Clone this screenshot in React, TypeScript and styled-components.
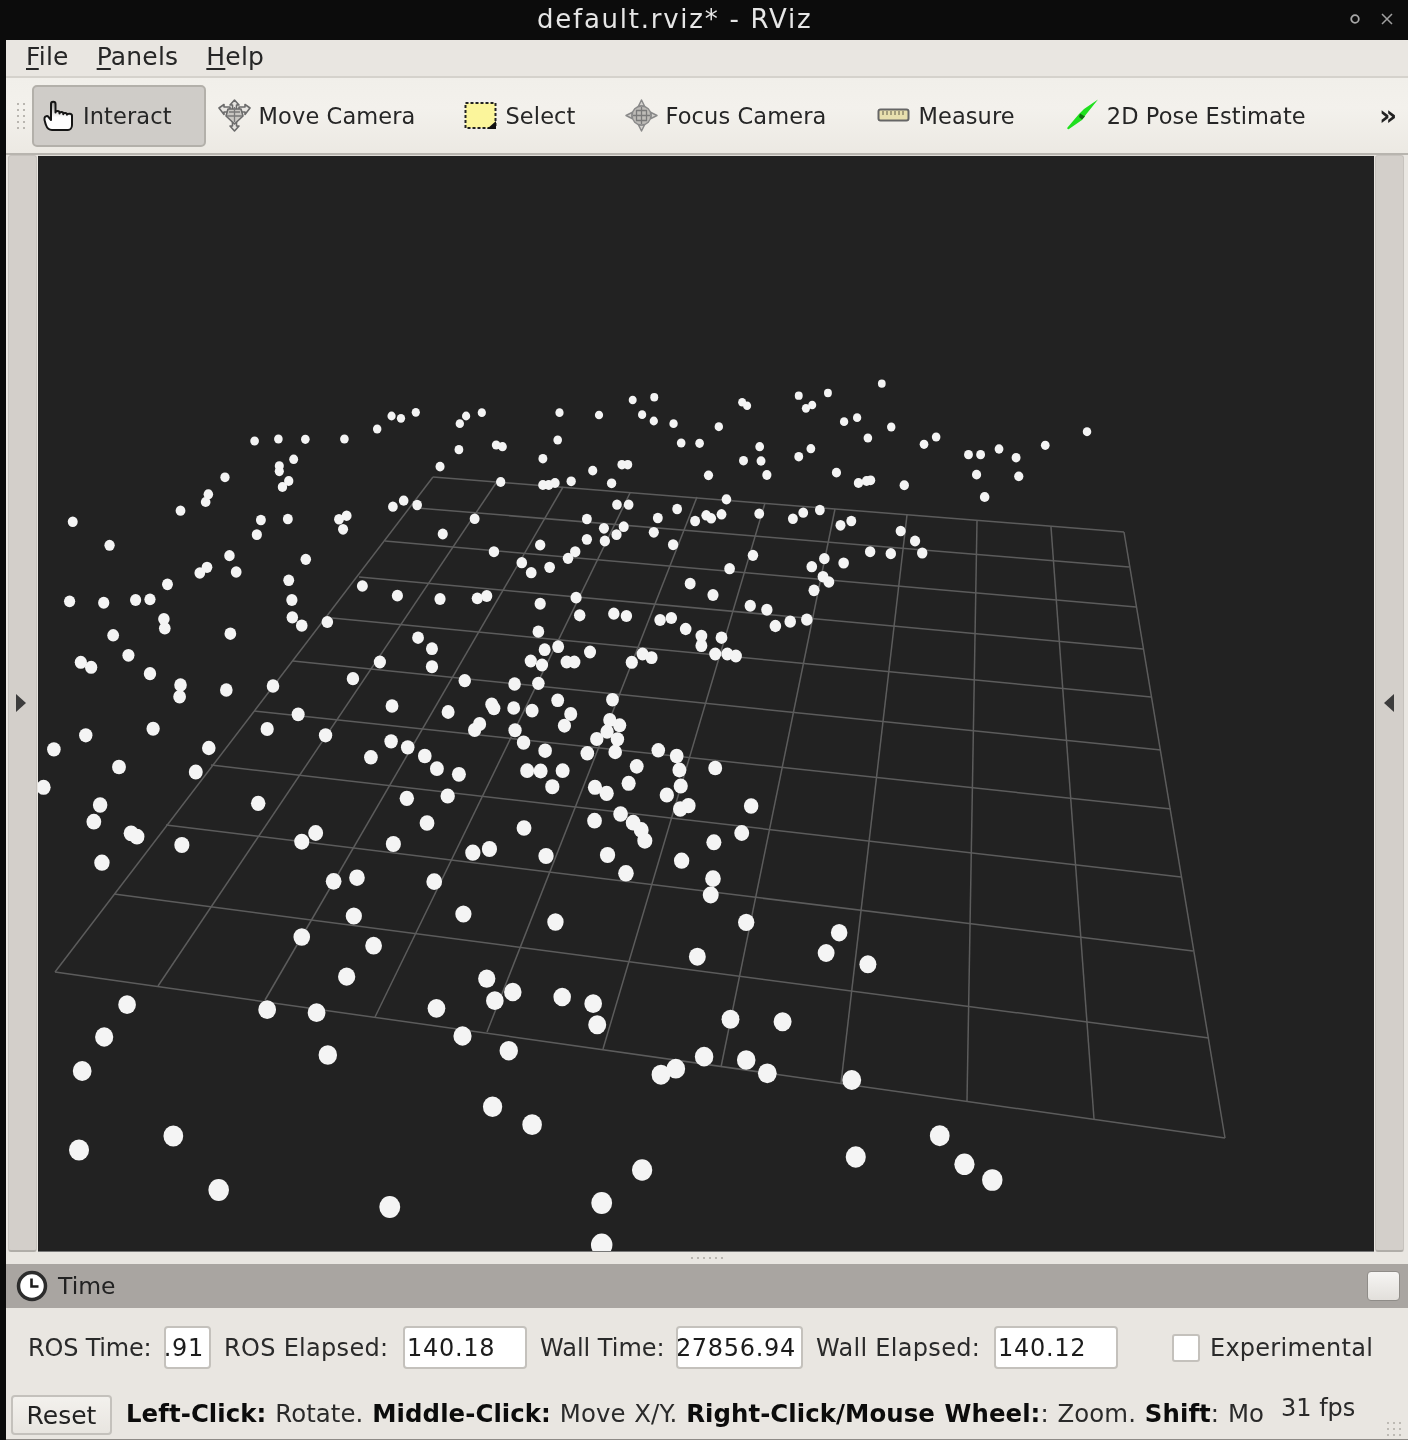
import React from "react";
import styled, { createGlobalStyle } from "styled-components";

const Global = createGlobalStyle`
  html, body { margin: 0; padding: 0; background: #0a0a0a; }
  #root { width: 1408px; height: 1440px; overflow: hidden; }
`;

const FONT = `"DejaVu Sans", "Liberation Sans", sans-serif`;

const Window = styled.div`
  width: 1408px;
  height: 1440px;
  display: flex;
  flex-direction: column;
  position: relative;
  overflow: hidden;
  background: #0a0a0a;
  font-family: ${FONT};
  color: #222;
  filter: blur(0.6px);
`;
const TitleBar = styled.div`
  height: 40px;
  flex: none;
  background: #0c0c0c;
  display: flex;
  align-items: center;
  justify-content: space-between;
  padding: 0 15px 2px 537px;
  box-sizing: border-box;
`;
const TitleText = styled.div`
  color: #e6e6e6;
  font-size: 26px;
  letter-spacing: 1.75px;
  white-space: nowrap;
`;
const WindowButtons = styled.div`
  display: flex;
  align-items: center;
  gap: 20px;
`;
const Body = styled.div`
  flex: 1;
  min-height: 0;
  display: flex;
  flex-direction: column;
  margin-left: 6px;
  background: #e9e6e1;
  border-bottom: 1px solid #8d8a86;
`;
const MenuBar = styled.div`
  height: 36px;
  flex: none;
  box-sizing: content-box;
  display: flex;
  align-items: center;
  gap: 28px;
  padding-left: 20px;
  padding-bottom: 0;
  font-size: 25px;
  letter-spacing: 0.2px;
  line-height: 32px;
  color: #262626;
  border-bottom: 2px solid #d5d2cc;
  span { margin-top: -3px; }
`;
const Toolbar = styled.div`
  height: 77px;
  flex: none;
  box-sizing: border-box;
  display: flex;
  align-items: center;
  gap: 2px;
  padding-left: 9px;
  padding-right: 12px;
  background: linear-gradient(#f1efea, #f3f1ec 40%, #ece9e3);
  border-bottom: 2px solid #b8b5af;
`;
const Grip = styled.div`
  width: 12px;
  height: 30px;
  margin-right: 3px;
  flex: none;
  background-image: radial-gradient(circle, #b9b6b0 1.1px, transparent 1.4px);
  background-size: 6px 6px;
`;
const Tool = styled.div<{ $active?: boolean; $extra?: number }>`
  height: 62px;
  box-sizing: border-box;
  display: flex;
  align-items: center;
  gap: 8px;
  padding: ${(p) =>
    p.$active ? "0 32px 0 8px" : `0 ${37 + (p.$extra ?? 0)}px 0 10px`};
  font-size: 22.5px;
  letter-spacing: 0.1px;
  white-space: nowrap;
  color: #262626;
  border-radius: 5px;
  border: ${(p) => (p.$active ? "2px solid #b3b0aa" : "none")};
  background: ${(p) => (p.$active ? "#cfccc8" : "transparent")};
`;
const Chevron = styled.div`
  margin-left: auto;
  margin-right: -1px;
  font-weight: bold;
  font-size: 28px;
  line-height: 1;
  color: #222;
`;
const Main = styled.div`
  height: 1097px;
  flex: none;
  display: flex;
  gap: 1px;
  padding-left: 2px;
  padding-right: 4px;
`;
const SideBar = styled.div<{ $side: "left" | "right" }>`
  width: 29px;
  flex: none;
  display: flex;
  align-items: center;
  justify-content: center;
  padding: ${(p) => (p.$side === "left" ? "0 4px 0 0" : "0 2px 0 0")};
  background: #d3cfca;
  border: 1px solid #c6c2bd;
  border-bottom: 2px solid #b0ada8;
  border-radius: 3px;
  box-sizing: border-box;
`;
const Arrow = styled.div<{ $dir: "left" | "right" }>`
  width: 0;
  height: 0;
  border-top: 9px solid transparent;
  border-bottom: 9px solid transparent;
  ${(p) =>
    p.$dir === "right"
      ? "border-left: 10px solid #3c3c3c;"
      : "border-right: 10px solid #3c3c3c;"}
`;
const Viewport = styled.svg`
  display: block;
  flex: 1;
  height: 1097px;
  background: #222222;
  border-top: 1px solid #e0ddd8;
  border-bottom: 1px solid #777;
  box-sizing: border-box;
`;
const Splitter = styled.div`
  height: 12px;
  flex: none;
  display: flex;
  align-items: center;
  justify-content: center;
`;
const SplitterDots = styled.div`
  width: 36px;
  height: 4px;
  background-image: radial-gradient(circle, #b9b6b0 1px, transparent 1.3px);
  background-size: 6px 4px;
`;
const TimeHeader = styled.div`
  height: 44px;
  flex: none;
  display: flex;
  align-items: center;
  gap: 10px;
  padding: 0 8px 0 10px;
  background: #a9a5a1;
  font-size: 23.5px;
  color: #222;
`;
const HeaderClose = styled.div`
  margin-left: auto;
  width: 33px;
  height: 30px;
  border-radius: 4px;
  border: 1px solid #8f8c88;
  box-sizing: border-box;
  background: linear-gradient(#f6f5f3, #e2dfdb);
`;
const TimeRow = styled.div`
  display: flex;
  align-items: center;
  height: 43px;
  flex: none;
  margin-top: 18px;
  padding-left: 22px;
  font-size: 24px;
  white-space: nowrap;
  color: #2a2a2a;
`;
const Label = styled.span<{ $w: number; $ls?: number }>`
  width: ${(p) => p.$w}px;
  flex: none;
  margin-right: 14px;
  letter-spacing: ${(p) => p.$ls ?? 0}px;
`;
const Field = styled.div<{ $w: number; $end?: boolean }>`
  width: ${(p) => p.$w}px;
  height: 43px;
  flex: none;
  box-sizing: border-box;
  background: #fff;
  border: 2px solid #c4c1bc;
  border-radius: 4px;
  margin-right: 13px;
  padding: 0 5px 0 2px;
  display: flex;
  align-items: center;
  justify-content: ${(p) => (p.$end ? "flex-end" : "flex-start")};
  font-size: 24px;
  letter-spacing: 0.7px;
  color: #1c1c1c;
  overflow: hidden;
`;
const Check = styled.div`
  width: 28px;
  height: 28px;
  flex: none;
  box-sizing: border-box;
  background: #fff;
  border: 2px solid #c4c1bc;
  border-radius: 3px;
  margin-left: 41px;
  margin-right: 10px;
`;
const CheckText = styled.span`
  letter-spacing: 0.25px;
`;
const StatusRow = styled.div`
  display: flex;
  align-items: center;
  height: 40px;
  flex: none;
  margin-top: 26px;
  padding-left: 5px;
  white-space: nowrap;
`;
const ResetButton = styled.div`
  width: 101px;
  height: 40px;
  flex: none;
  box-sizing: border-box;
  display: flex;
  align-items: center;
  justify-content: center;
  font-size: 25px;
  color: #222;
  border: 2px solid #c4c1bc;
  border-radius: 4px;
  background: linear-gradient(#f3f1ed, #e8e5e0);
`;
const StatusText = styled.div`
  width: 1137px;
  margin-left: 14px;
  margin-bottom: 4px;
  flex: none;
  overflow: hidden;
  font-size: 24.4px;
  color: #2a2a2a;
  letter-spacing: 0.08px;
  word-spacing: 1px;
  b { color: #0c0c0c; font-weight: bold; }
`;
const Fps = styled.div`
  margin-left: 18px;
  margin-bottom: 14px;
  font-size: 24px;
  color: #2a2a2a;
`;
const SizeGrip = styled.div`
  position: absolute;
  right: 3px;
  bottom: 2px;
  width: 20px;
  height: 18px;
  background-image: radial-gradient(circle, #bdbab4 1px, transparent 1.3px);
  background-size: 6px 6px;
`;
const Underlined = styled.span`
  text-decoration: underline;
  text-underline-offset: 3px;
  margin-top: 0 !important;
`;

// Scene data, read from enlarged crops: [crop x, crop y], crop x is 2.227 × px and crop y is 3 × px.
const CROP_A: number[][] = [[567,213],[620,207],[680,208],[767,207],[840,177],[872,138],[893,145],[926,127],[1038,138],[1024,161],[1073,128],[1246,128],[1334,135],[1409,90],[1457,82],[1430,134],[1456,153],[1500,161],[1517,219],[1558,220],[1242,210],[1022,239],[1105,225],[1119,230],[1209,266],[1320,302],[1385,284],[1398,284],[980,290],[654,268],[622,288],[622,304],[643,333],[629,351],[501,322],[464,373],[458,396],[402,422],[162,455],[244,526],[581,450],[641,447],[572,494],[755,448],[772,437],[764,478],[875,410],[899,392],[929,405],[1115,336],[1209,345],[1222,345],[1236,339],[1272,334],[1362,340],[1374,404],[1400,404],[1508,417],[1057,446],[986,492],[1307,447],[1345,475],[1389,470],[1373,494],[1347,513],[1307,508],[1465,444],[1456,487],[1548,453],[1499,524],[1100,545],[1203,525],[1281,545],[1265,565],[1162,578],[1183,608],[1224,592],[511,557],[461,592],[445,609],[526,606],[681,568],[373,643],[155,694],[231,698],[302,690],[334,688],[643,631],[650,690],[807,648],[885,677],[980,687],[1063,685],[1084,678],[1283,683],[1203,701],[1537,641],[1291,736],[1367,731],[1395,738],[1470,750],[1495,744],[1527,777],[365,747],[367,775],[252,796],[651,742],[672,767],[729,756],[513,791],[1199,785],[931,803],[962,836],[1243,830],[1213,839],[1314,846],[1431,852],[1451,863],[1407,877],[1182,873],[1207,885],[1262,876],[1279,876],[180,877],[203,892],[286,856],[334,911],[846,876],[962,890],[1562,798],[1562,827],[402,945],[400,980],[504,960],[608,948],[786,926],[1035,932],[1146,942],[1199,940],[1242,991],[1364,989],[873,1008],[998,1026],[1095,1003],[1100,1015],[1144,1014],[1185,1022],[1271,1032],[1257,1067],[1358,1050],[1380,1066],[664,1033],[341,1076],[595,1077],[1068,1062],[1057,1080],[1147,1081],[1352,1085],[1329,1107],[1375,1108],[191,1096],[725,1096],[120,1138],[465,1134],[871,1114],[908,1132],[1166,1118],[1214,1142],[1308,1150],[1370,1146],[1466,1141],[1507,1158],[826,1162],[946,1158],[265,1191],[973,1196],[1022,1213],[1174,1202],[1204,1203],[1253,1202],[1418,1189],[1513,1200],[436,1206],[97,1252],[1230,1250],[1325,1252],[1351,1270],[1400,1240],[1516,1248],[906,1285],[997,1278],[1485,1275]];
const CROP_B: number[][] = [[396,41],[211,77],[276,69],[85,97],[96,107],[227,115],[241,105],[33,170],[312,155],[341,143],[417,171],[365,204],[490,223],[517,201],[853,185],[124,230],[238,236],[88,272],[127,273],[211,260],[589,254],[616,254],[657,237],[695,263],[760,226],[10,316],[140,315],[295,308],[344,339],[362,333],[371,331],[446,346],[607,314],[701,319],[625,381],[50,388],[123,431],[198,446],[221,428],[258,420],[5,436],[16,445],[39,433],[304,466],[328,453],[438,483],[470,513],[370,545],[416,551],[486,549],[109,556],[268,566],[311,579],[57,596],[240,590],[265,620],[278,636],[245,661],[20,675],[103,707],[140,719],[159,768],[192,755],[229,749],[39,803],[25,852],[52,852],[71,858],[25,1194]];
const CROP_C: number[][] = [[223,15],[575,10],[209,65],[292,100],[305,110],[405,135],[227,188],[672,125],[703,99],[876,132],[951,69],[1167,84],[1324,62],[1382,42],[1410,68],[1428,90],[1436,122],[1515,27],[1533,17],[1053,158],[1090,147],[1216,168],[1353,165],[1518,182],[1394,220],[743,244],[795,233],[967,245],[788,348],[1032,342],[1237,366],[672,411],[832,437],[1553,470],[772,530],[1084,536],[1142,576],[1102,602],[1252,591],[1321,611],[1330,674],[283,614],[232,711],[183,813],[595,629],[705,638],[972,625],[1030,708],[1133,752],[730,765],[1505,806],[1472,824],[1568,770],[1097,920],[1185,974],[386,1008],[176,1050],[487,1170],[868,1221],[1430,1110],[1340,1209],[1340,1335]];
const CROP_D: number[][] = [[105,18],[84,99],[22,127],[20,236],[15,285],[94,367],[301,398],[272,459],[365,493],[59,658],[175,665],[94,780],[141,820],[329,840],[525,1007],[338,1071],[580,1093],[642,1140]];

const place = (list: number[][], ox: number, oy: number) =>
  list.map(([x, y]) => [ox + x / 2.227, oy + y / 3]);
const DOTS = [
  ...place(CROP_A, 0, 370),
  ...place(CROP_B, 704, 370),
  ...place(CROP_C, 0, 800),
  ...place(CROP_D, 704, 800),
];
const radiusAt = (y: number) => 4 + (y - 400) * 0.008;

const LEFT_EDGE = [[433,477],[417,508],[385,541],[359,577],[332,618],[293,661],[254,711],[211,765],[166,825],[114,894],[55,972]];
const RIGHT_EDGE = [[1124,532],[1129,567],[1136,607],[1143,649],[1151,697],[1161,750],[1171,809],[1181,877],[1193,951],[1209,1038],[1225,1138]];
const TOP_EDGE = [[433,477],[496,483],[563,487],[630,493],[697,497],[765,503],[835,509],[907,515],[977,521],[1051,527],[1124,532]];
const BOTTOM_EDGE = [[55,972],[158,986],[265,1000],[375,1017],[487,1032],[603,1049],[721,1067],[841,1083],[967,1101],[1094,1119],[1225,1138]];

const Scene = () => (
  <Viewport viewBox="38 156 1336 1095" preserveAspectRatio="none">
    <g stroke="#5c5c5c" strokeWidth="1.5" fill="none">
      {LEFT_EDGE.map((p, i) => (
        <line key={`h${i}`} x1={p[0]} y1={p[1]} x2={RIGHT_EDGE[i][0]} y2={RIGHT_EDGE[i][1]} />
      ))}
      {TOP_EDGE.map((p, i) => (
        <line key={`v${i}`} x1={p[0]} y1={p[1]} x2={BOTTOM_EDGE[i][0]} y2={BOTTOM_EDGE[i][1]} />
      ))}
    </g>
    <g fill="#f4f4f4">
      {DOTS.map(([x, y], i) => (
        <ellipse key={i} cx={x} cy={y} rx={radiusAt(y)} ry={radiusAt(y) * 1.06} />
      ))}
    </g>
  </Viewport>
);

const IconSvg = styled.svg`
  width: 33px;
  height: 33px;
  flex: none;
  display: block;
`;

const HandIcon = () => (
  <IconSvg viewBox="0 0 33 33">
    <defs>
      <linearGradient id="handFill" x1="0" y1="0" x2="0" y2="1">
        <stop offset="0" stopColor="#9d9b98" />
        <stop offset="0.55" stopColor="#fff" />
      </linearGradient>
    </defs>
    <path
      d="M9 18V5c0-3 4.500-3 4.500 0v8.500c0-2 4-2 4 0v1c0-2 3.800-2 3.800 0v.8c0-2 3.700-1.800 3.700.2v.2c.5-1.500 5-1.500 5 1V26c0 3-2 5-4 5H10c-3 0-5-2-6-5-1-3-2-5-1.500-7 .5-2 3-2.500 4-1L9 21z"
      fill="url(#handFill)"
      stroke="#151515"
      strokeWidth="2"
      strokeLinejoin="round"
    />
  </IconSvg>
);

const MoveIcon = () => (
  <IconSvg viewBox="0 0 33 33">
    <g fill="#e8e6e2" stroke="#6b6b6b" strokeWidth="1.6" strokeLinejoin="round">
      <path d="M16.500 1l4.500 5h-2.500v5h-4V6H12z" />
      <path d="M16.500 32l4.500-5h-2.500v-5h-4v5H12z" />
      <path d="M1 9l5-3.500V8h6v5H6v2.500z" />
      <path d="M32 9l-5-3.500V8h-6v5h6v2.500z" />
      <path d="M10 10h13l2 7-8.500 8L8 17z" fill="#c9c7c3" />
    </g>
    <path d="M11 13h11M9 17h15M16.500 8v15" stroke="#7a7a7a" strokeWidth="1.300" />
  </IconSvg>
);

const SelectIcon = () => (
  <IconSvg viewBox="0 0 33 33">
    <rect x="1.500" y="4" width="30" height="25" fill="#fbf59b" />
    <rect x="1.500" y="4" width="30" height="25" fill="none" stroke="#222" strokeWidth="2" strokeDasharray="3 2" />
    <path d="M32 22v8H23z" fill="#111" />
  </IconSvg>
);

const FocusIcon = () => (
  <IconSvg viewBox="0 0 33 33">
    <g stroke="#8a8a8a" fill="#d4d2ce" strokeLinejoin="round" strokeWidth="1.500">
      <path d="M16.500 1l3 6h-6zM16.500 32l3-6h-6zM1 16.500l6-3v6zM32 16.500l-6-3v6z" />
      <circle cx="16.500" cy="16.500" r="9.500" fill="#bdbbb7" />
    </g>
    <path d="M16.500 8v17M8 16.500h17M11 11.500h11M11 21.500h11M11.500 11v11M21.500 11v11" stroke="#7a7a7a" strokeWidth="1.300" />
  </IconSvg>
);

const RulerIcon = () => (
  <IconSvg viewBox="0 0 33 33">
    <rect x="1.500" y="10.500" width="30" height="11" rx="2" fill="#e8dfae" stroke="#666" strokeWidth="2" />
    <path d="M6 12v4M10 12v4M14 12v4M18 12v4M22 12v4M26 12v4" stroke="#77725a" strokeWidth="1.200" />
  </IconSvg>
);

const PoseIcon = () => (
  <IconSvg viewBox="0 0 33 33">
    <path d="M32 .5L18 10l-5 5-11.500 13.500c-.8 1 .4 2.200 1.500 1.500L16 21l4-5.500z" fill="#1fe01f" />
    <path d="M14 14.500l5 3-3 3-3-2.500z" fill="#126e12" />
  </IconSvg>
);

const ClockSvg = styled.svg`
  width: 32px;
  height: 32px;
  flex: none;
  display: block;
`;
const ClockIcon = () => (
  <ClockSvg viewBox="0 0 32 32">
    <circle cx="16" cy="16" r="13.500" fill="#fff" stroke="#2c2c2c" strokeWidth="3.500" />
    <path d="M15.500 8.500v8h7" fill="none" stroke="#1c1c1c" strokeWidth="2.600" />
  </ClockSvg>
);

const WinCircle = styled.svg`
  width: 12px;
  height: 12px;
  display: block;
`;

const App = () => (
  <Window>
    <Global />
    <TitleBar>
      <TitleText>default.rviz* - RViz</TitleText>
      <WindowButtons>
        <WinCircle viewBox="0 0 12 12">
          <circle cx="6" cy="6" r="3.800" fill="none" stroke="#a8a8a8" strokeWidth="1.800" />
        </WinCircle>
        <WinCircle viewBox="0 0 12 12">
          <path d="M1 1l10 10M11 1L1 11" stroke="#a0a0a0" strokeWidth="1.500" />
        </WinCircle>
      </WindowButtons>
    </TitleBar>
    <Body>
      <MenuBar>
        <span><Underlined>F</Underlined>ile</span>
        <span><Underlined>P</Underlined>anels</span>
        <span><Underlined>H</Underlined>elp</span>
      </MenuBar>
      <Toolbar>
        <Grip />
        <Tool $active><HandIcon />Interact</Tool>
        <Tool><MoveIcon />Move Camera</Tool>
        <Tool><SelectIcon />Select</Tool>
        <Tool $extra={2}><FocusIcon />Focus Camera</Tool>
        <Tool $extra={2}><RulerIcon />Measure</Tool>
        <Tool><PoseIcon />2D Pose Estimate</Tool>
        <Chevron>»</Chevron>
      </Toolbar>
      <Main>
        <SideBar $side="left"><Arrow $dir="right" /></SideBar>
        <Scene />
        <SideBar $side="right"><Arrow $dir="left" /></SideBar>
      </Main>
      <Splitter><SplitterDots /></Splitter>
      <TimeHeader>
        <ClockIcon />
        <span>Time</span>
        <HeaderClose />
      </TimeHeader>
      <TimeRow>
        <Label $w={122} $ls={-0.2}>ROS Time:</Label>
        <Field $w={47} $end>.91</Field>
        <Label $w={165} $ls={0.3}>ROS Elapsed:</Label>
        <Field $w={124}>140.18</Field>
        <Label $w={122}>Wall Time:</Label>
        <Field $w={127} $end>27856.94</Field>
        <Label $w={164} $ls={0.3}>Wall Elapsed:</Label>
        <Field $w={124}>140.12</Field>
        <Check />
        <CheckText>Experimental</CheckText>
      </TimeRow>
      <StatusRow>
        <ResetButton>Reset</ResetButton>
        <StatusText>
          <b>Left-Click:</b> Rotate. <b>Middle-Click:</b> Move X/Y. <b>Right-Click/Mouse Wheel:</b>: Zoom. <b>Shift</b>: Mo
        </StatusText>
        <Fps>31 fps</Fps>
      </StatusRow>
    </Body>
    <SizeGrip />
  </Window>
);

export default App;
